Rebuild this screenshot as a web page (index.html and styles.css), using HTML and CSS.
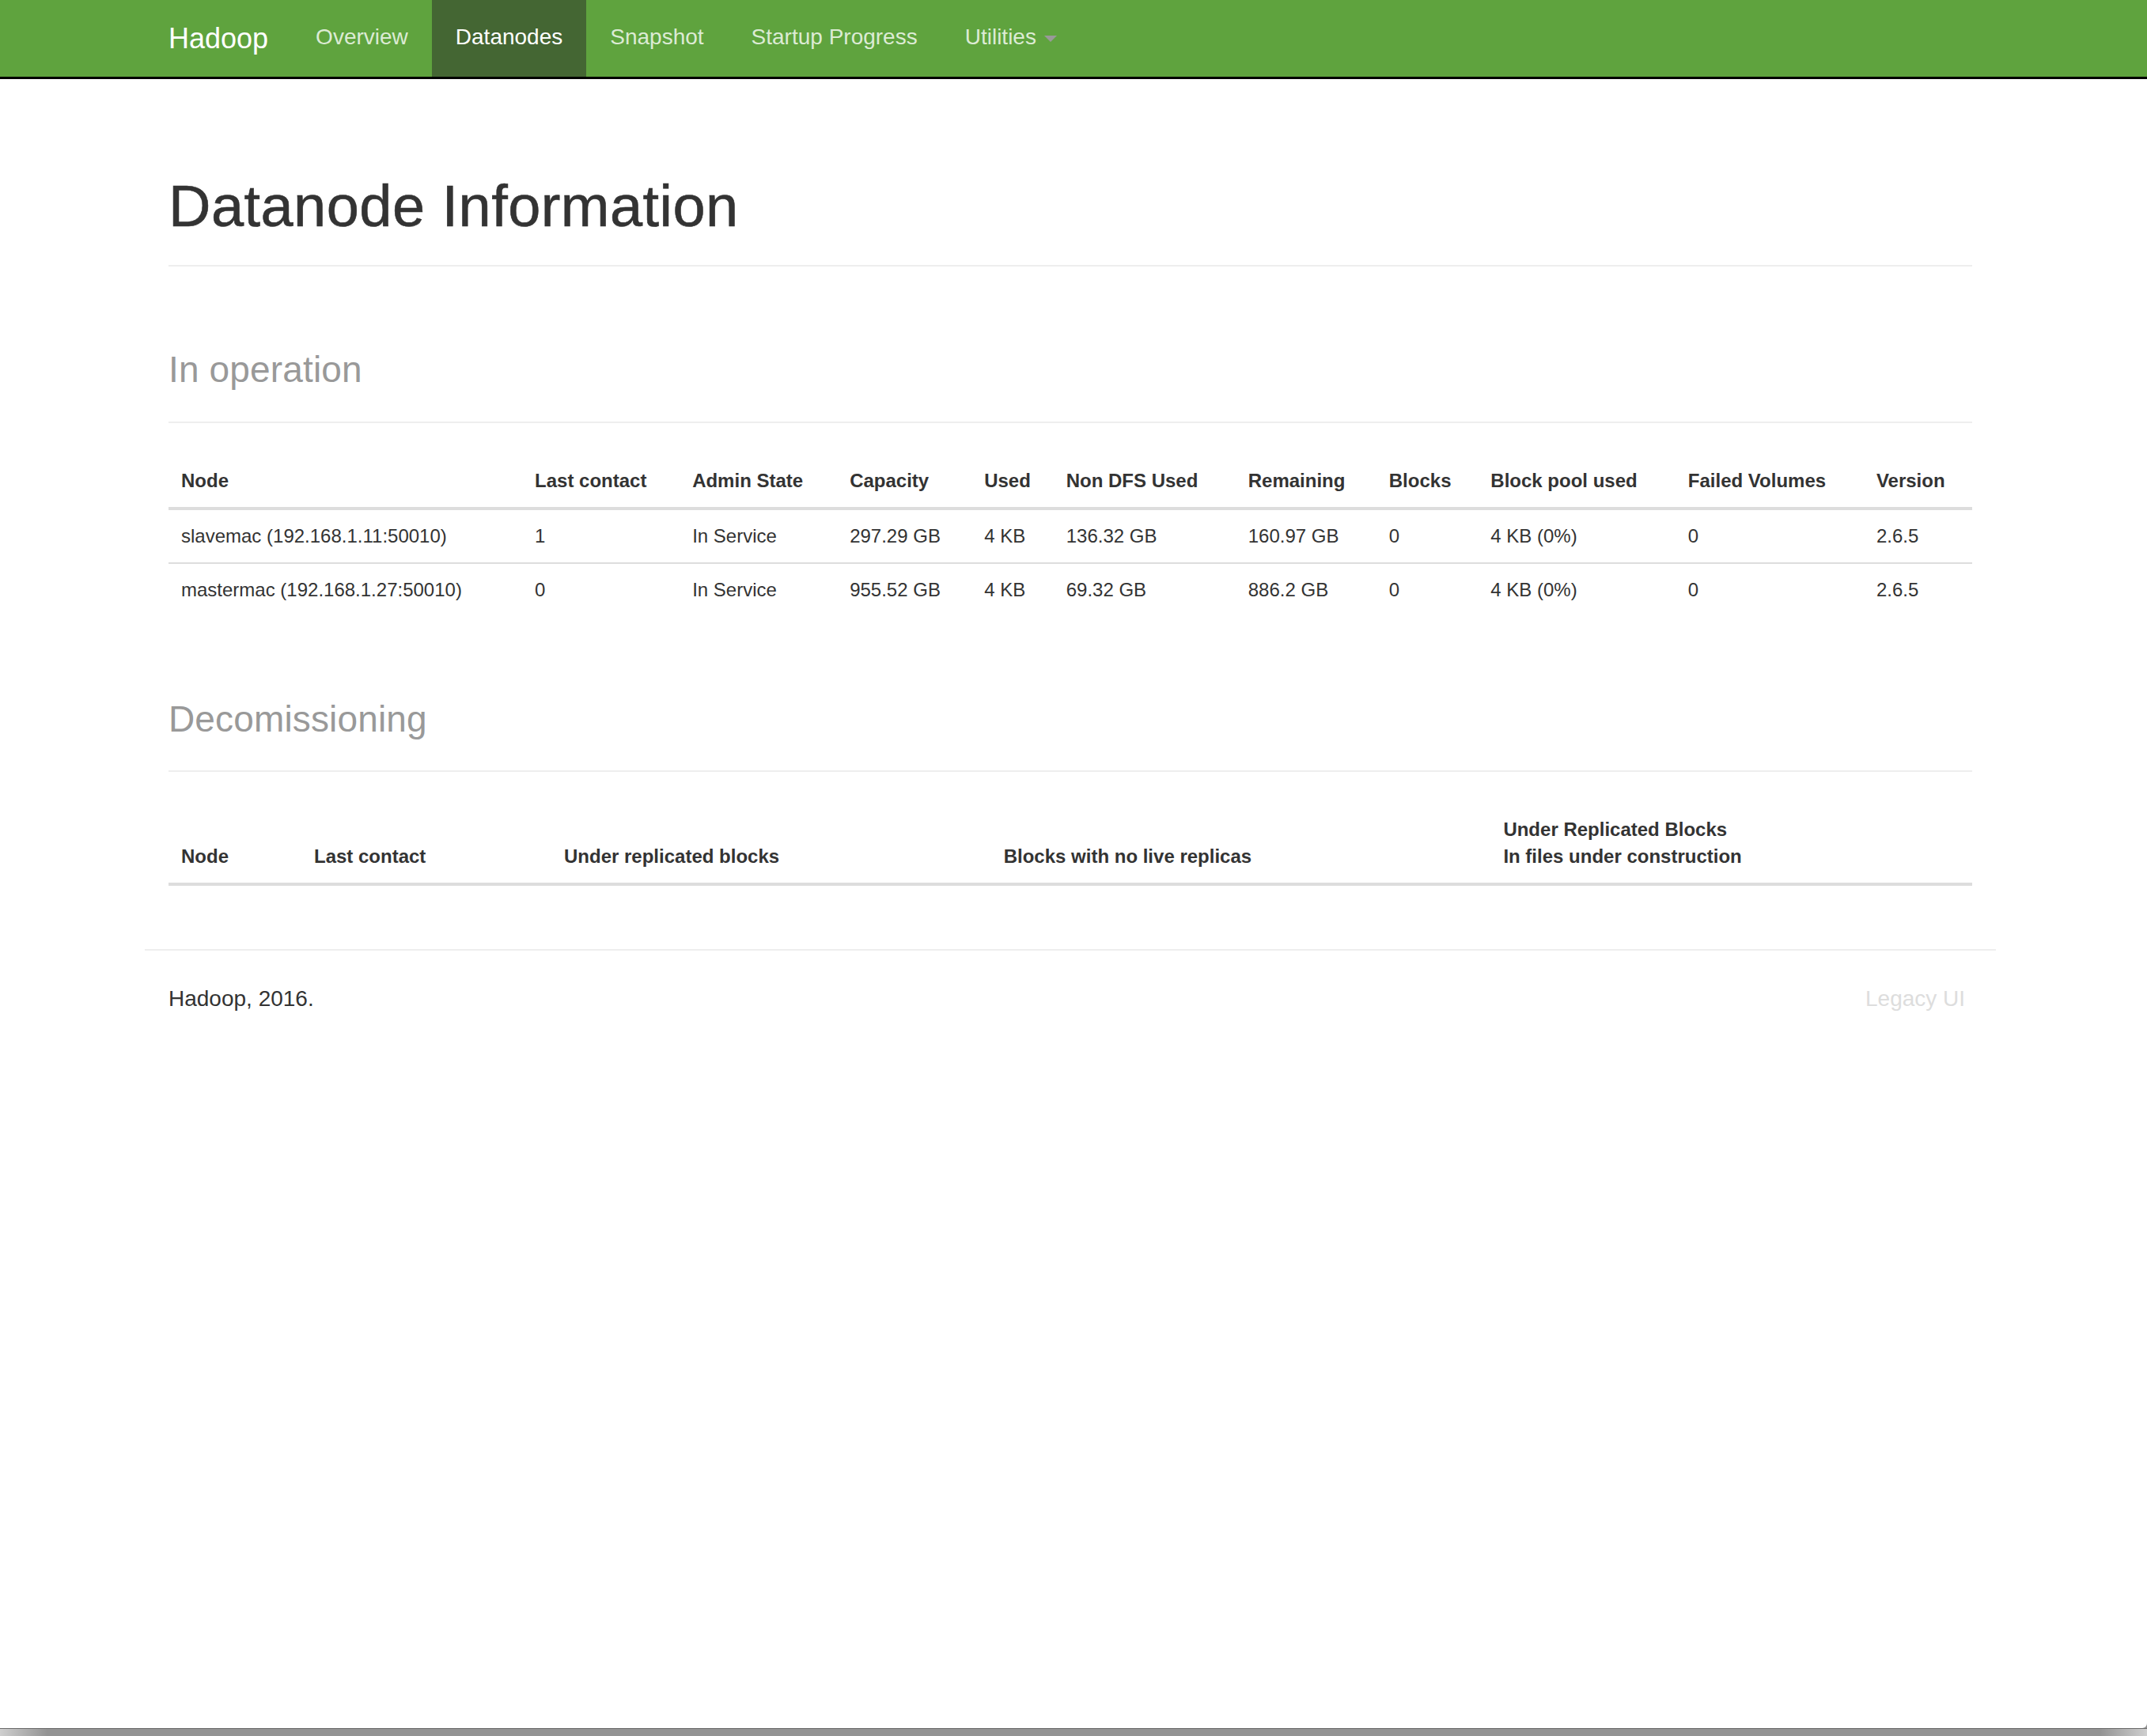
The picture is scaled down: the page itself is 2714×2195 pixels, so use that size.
FILE: index.html
```html
<!DOCTYPE html>
<html lang="en">
<head>
<meta charset="utf-8">
<title>Datanode Information</title>
<link rel="stylesheet" href="styles.css">
</head>
<body>
<div class="window">
  <header class="navbar">
    <div class="container nav-inner">
      <a class="brand" href="#">Hadoop</a>
      <ul class="nav">
        <li><a href="#">Overview</a></li>
        <li class="active"><a href="#">Datanodes</a></li>
        <li><a href="#">Snapshot</a></li>
        <li><a href="#">Startup Progress</a></li>
        <li><a href="#">Utilities <b class="caret"></b></a></li>
      </ul>
    </div>
  </header>

  <div class="main">
    <div class="container">
      <div class="page-header first"><h1 class="title">Datanode Information</h1></div>

      <div class="page-header"><h1><small>In operation</small></h1></div>
      <table class="table dn-table">
        <thead>
          <tr>
            <th>Node</th>
            <th>Last contact</th>
            <th>Admin State</th>
            <th>Capacity</th>
            <th>Used</th>
            <th>Non DFS Used</th>
            <th>Remaining</th>
            <th>Blocks</th>
            <th>Block pool used</th>
            <th>Failed Volumes</th>
            <th>Version</th>
          </tr>
        </thead>
        <tbody>
          <tr>
            <td>slavemac (192.168.1.11:50010)</td>
            <td>1</td>
            <td>In Service</td>
            <td>297.29 GB</td>
            <td>4 KB</td>
            <td>136.32 GB</td>
            <td>160.97 GB</td>
            <td>0</td>
            <td>4 KB (0%)</td>
            <td>0</td>
            <td>2.6.5</td>
          </tr>
          <tr>
            <td>mastermac (192.168.1.27:50010)</td>
            <td>0</td>
            <td>In Service</td>
            <td>955.52 GB</td>
            <td>4 KB</td>
            <td>69.32 GB</td>
            <td>886.2 GB</td>
            <td>0</td>
            <td>4 KB (0%)</td>
            <td>0</td>
            <td>2.6.5</td>
          </tr>
        </tbody>
      </table>

      <div class="page-header"><h1><small>Decomissioning</small></h1></div>
      <table class="table decom-table">
        <thead>
          <tr>
            <th>Node</th>
            <th>Last contact</th>
            <th>Under replicated blocks</th>
            <th>Blocks with no live replicas</th>
            <th>Under Replicated Blocks <br>In files under construction</th>
          </tr>
        </thead>
        <tbody></tbody>
      </table>

      <footer class="row footer">
        <hr>
        <div class="col-2"><p>Hadoop, 2016.</p></div>
        <div class="col-1"><a class="legacy" href="#">Legacy UI</a></div>
      </footer>
    </div>
  </div>
</div>
<div class="shadow"></div>
</body>
</html>
```

FILE: styles.css
```css
* {
  box-sizing: border-box;
}

html,
body {
  margin: 0;
  padding: 0;
}

body {
  font-family: "Liberation Sans", Arial, Helvetica, sans-serif;
  color: #333;
  background: #939393;
  height: 2195px;
  display: flex;
  flex-direction: column;
  overflow: hidden;
}

.window {
  flex: 1;
  background: #fff;
  border-bottom-right-radius: 6px;
}

.container {
  width: 2340px;
  margin: 0 auto;
  padding: 0 30px;
}

/* navbar */
.navbar {
  height: 100px;
  background: #5fa33e;
  border-bottom: 3px solid #000;
  padding-right: 8px;
}

.nav-inner {
  display: flex;
  align-items: flex-start;
}

.brand {
  display: block;
  margin-left: -30px;
  padding: 29px 30px 0;
  height: 97px;
  font-size: 36px;
  line-height: 40px;
  color: #fff;
  text-decoration: none;
}

.nav {
  display: flex;
  list-style: none;
  margin: 0;
  padding: 0;
}

.nav a {
  display: block;
  height: 97px;
  padding: 27px 30px 0;
  font-size: 28px;
  line-height: 40px;
  color: #dcebd4;
  text-decoration: none;
}

.nav .active a {
  background: #446633;
  color: #fff;
}

.caret {
  display: inline-block;
  width: 0;
  height: 0;
  margin-left: 2px;
  vertical-align: middle;
  border-top: 8px solid #999;
  border-left: 8px solid transparent;
  border-right: 8px solid transparent;
}

/* main */
.main {
  padding-right: 8px;
}

.page-header {
  margin: 81px 0 40px;
  padding-bottom: 34.5px;
  border-bottom: 2px solid #eee;
}

.page-header.first {
  margin-top: 120.5px;
}

h1 {
  margin: 0;
  font-size: 74px;
  line-height: 80px;
  font-weight: normal;
  color: #333;
}

h1.title {
  letter-spacing: 0.45px;
  -webkit-text-stroke: 0.6px #333;
}

h1 small {
  font-size: 46px;
  line-height: 1;
  color: #999;
  letter-spacing: 0.15px;
}

/* tables */
.table {
  width: 100%;
  border-collapse: collapse;
  border-spacing: 0;
  table-layout: fixed;
  margin: 0 0 40px;
  font-size: 24px;
  line-height: 34px;
  color: #333;
}

.table th,
.table td {
  padding: 16px;
  text-align: left;
  white-space: nowrap;
}

.table thead th {
  vertical-align: bottom;
  border-bottom: 4px solid #ddd;
  font-weight: bold;
}

.table tbody td {
  vertical-align: top;
  border-top: 2px solid #ddd;
}

.table tbody tr:first-child td {
  border-top: 0;
}

.dn-table th:nth-child(1) { width: 447px; }
.dn-table th:nth-child(2) { width: 199px; }
.dn-table th:nth-child(3) { width: 199px; }
.dn-table th:nth-child(4) { width: 170px; }
.dn-table th:nth-child(5) { width: 103.5px; }
.dn-table th:nth-child(6) { width: 230px; }
.dn-table th:nth-child(7) { width: 178px; }
.dn-table th:nth-child(8) { width: 128.5px; }
.dn-table th:nth-child(9) { width: 249.5px; }
.dn-table th:nth-child(10) { width: 238px; }
.dn-table th:nth-child(11) { width: 137px; }

.decom-table th:nth-child(1) { width: 168px; }
.decom-table th:nth-child(2) { width: 316px; }
.decom-table th:nth-child(3) { width: 555.7px; }
.decom-table th:nth-child(4) { width: 631.7px; }
.decom-table th:nth-child(5) { width: 608.6px; }

/* footer */
.footer {
  display: flex;
  flex-wrap: wrap;
  justify-content: space-between;
  margin: 0 -30px;
}

.footer hr {
  width: 100%;
  margin: 40px 0 41px;
  border: 0;
  border-top: 2px solid #eee;
  height: 0;
}

.col-2 {
  width: 390px;
  padding: 0 30px;
}

.col-1 {
  width: 195px;
  padding: 0 30px;
}

.footer p {
  margin: 0 0 20px;
  font-size: 28px;
  line-height: 40px;
  color: #333;
}

.legacy {
  font-size: 28px;
  line-height: 40px;
  color: #ddd;
  text-decoration: none;
}

.shadow {
  height: 10px;
  flex: none;
  border-top: 1px solid #6a6a6a;
  background: linear-gradient(to right, #cfcfcf 0, #939393 60px, #939393 calc(100% - 60px), #cfcfcf 100%);
}
```
